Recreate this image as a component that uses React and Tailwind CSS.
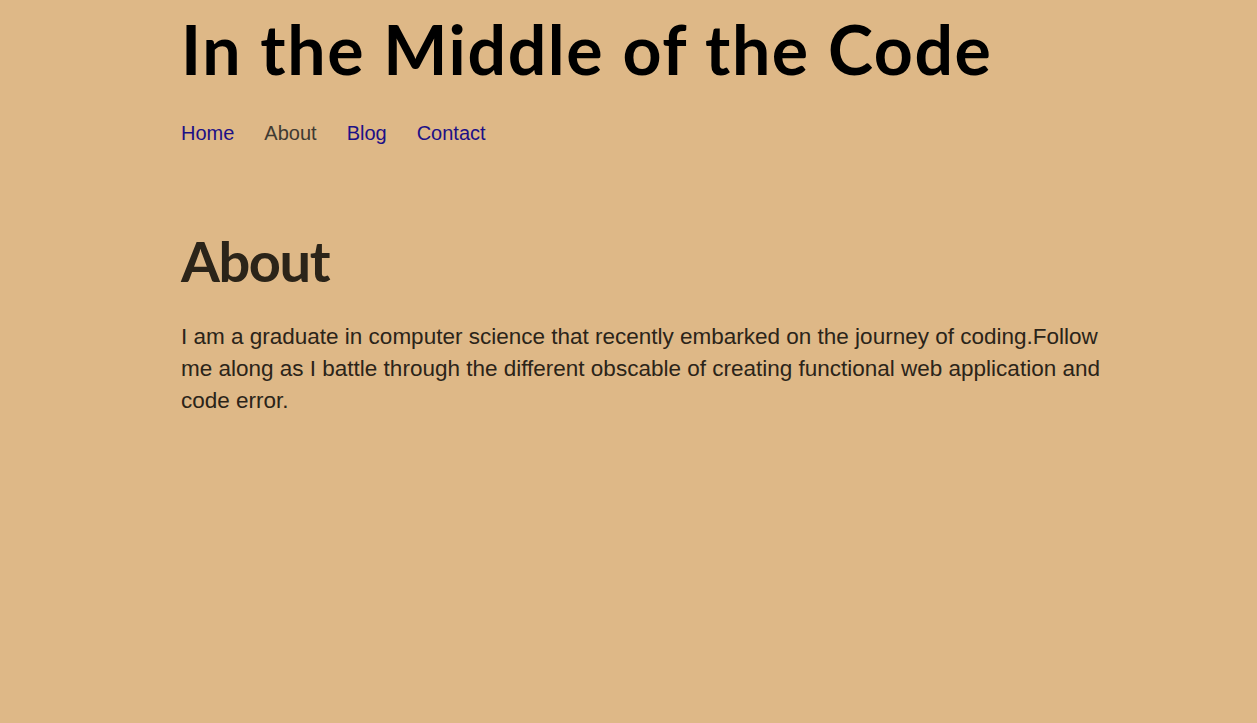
export default function App() {
  const links = [
    { label: "Home", active: false },
    { label: "About", active: true },
    { label: "Blog", active: false },
    { label: "Contact", active: false },
  ];

  return (
    <div className="min-h-[723px] w-full bg-[#deb887]">
      <div className="ml-[181px] w-[925px]">
        <header>
          <h1 className="font-['Lato',sans-serif] text-[68px] font-bold leading-[98px] tracking-[1.6px] text-black">
            In the Middle of the Code
          </h1>
          <nav className="mt-[23px] flex gap-[30px] font-['Liberation_Sans',Arial,sans-serif] text-[20px] leading-[24px]">
            {links.map((l) => (
              <a
                key={l.label}
                href="#"
                className={l.active ? "text-[#3f3a32]" : "text-[#1c1086]"}
              >
                {l.label}
              </a>
            ))}
          </nav>
        </header>

        <main className="mt-[84px]">
          <h2 className="font-['Lato',sans-serif] text-[56px] font-bold leading-[64px] tracking-[-1.4px] text-[#2b2419]">
            About
          </h2>
          <p className="mt-[28px] font-['Liberation_Sans',Arial,sans-serif] text-[22.5px] leading-[32px] text-[#2b2419]">
            I am a graduate in computer science that recently embarked on the journey of coding.Follow me along as I battle
            through the different obscable of creating functional web application and code error.
          </p>
        </main>
      </div>
    </div>
  );
}
